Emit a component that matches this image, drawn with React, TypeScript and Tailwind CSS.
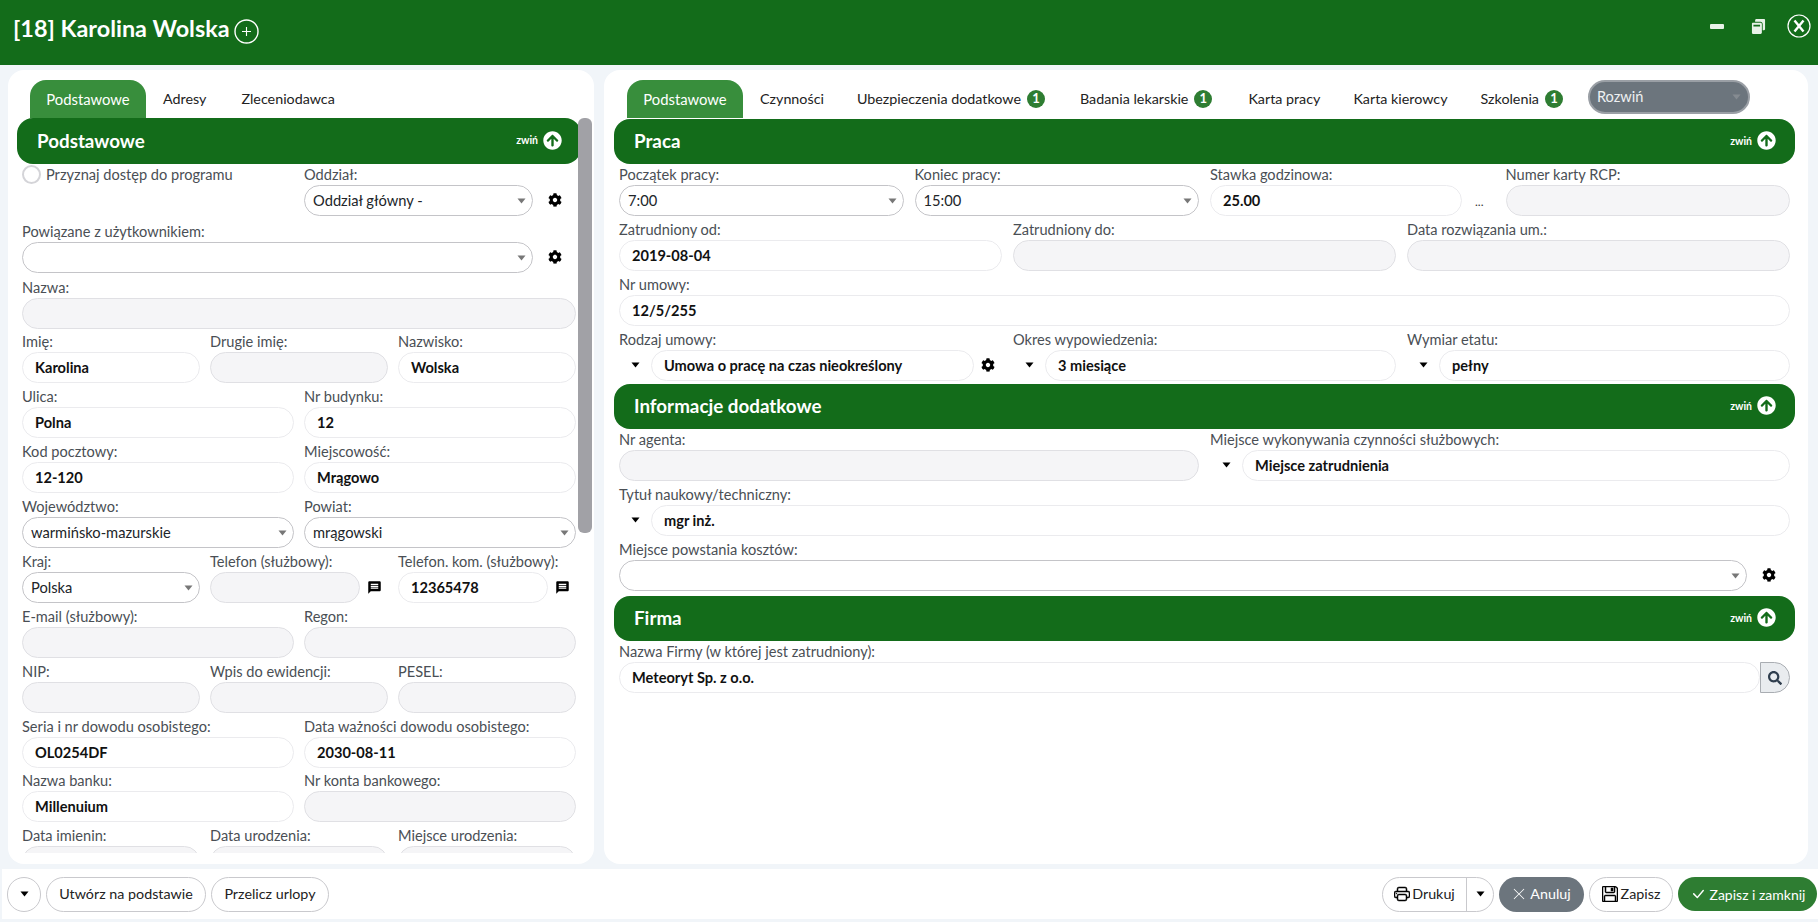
import React from "react";
import { BsPrinter, BsFloppy, BsXLg, BsCheckLg } from "react-icons/bs";
import { FaCog, FaSearch, FaWindowRestore, FaArrowCircleUp } from "react-icons/fa";
import { MdMessage } from "react-icons/md";

const Caret = ({ className = "text-[#777]" }: { className?: string }) => (
  <svg width="9" height="6" viewBox="0 0 9 6" className={className}><path d="M0.5 0.5h8L4.5 5.5z" fill="currentColor" /></svg>
);

const Gear = () => <FaCog className="text-black text-[14px] shrink-0" />;

function Control({ value, kind = "text", className = "" }: { value?: string; kind?: "text" | "disabled" | "select"; className?: string }) {
  if (kind === "select") {
    return (
      <div className={`h-[31px] rounded-full border border-[#c4c4c8] bg-white flex items-center justify-between pl-[8px] pr-[6px] text-[14.7px] text-[#212529] ${className}`}>
        <span>{value}</span>
        <Caret />
      </div>
    );
  }
  if (kind === "disabled") {
    return <div className={`h-[31px] rounded-full border border-[#e0e0e4] bg-[#f5f5f7] ${className}`} />;
  }
  return (
    <div className={`h-[31px] rounded-full border border-[#ebebee] bg-white flex items-center pl-[12px] text-[14.6px] font-bold text-[#111] whitespace-nowrap ${className}`}>{value}</div>
  );
}

function Label({ children }: { children?: React.ReactNode }) {
  return <div className="h-[24px] pt-[4px] text-[14.6px] leading-[20px] text-[#4a4f55] whitespace-nowrap">{children}</div>;
}

function Field({ label, value, kind, after, before, wide }: { label: string; value?: string; kind?: "text" | "disabled" | "select"; after?: React.ReactNode; before?: boolean; wide?: boolean }) {
  return (
    <div className="min-w-0">
      <Label>{label}</Label>
      <div className="flex items-center">
        {before && <div className="w-[32px] shrink-0 flex justify-center pb-[2px]"><Caret className="text-black" /></div>}
        <Control value={value} kind={kind} className="flex-1 min-w-0" />
        {after && <div className={`${wide ? "w-[43px]" : "w-[28px]"} shrink-0 flex justify-center pb-[1px]`}>{after}</div>}
      </div>
    </div>
  );
}

function Section({ title, tall }: { title: string; tall?: boolean }) {
  return (
    <div className={`${tall ? "h-[46px]" : "h-[45px]"} rounded-[16px] bg-[#136c1a] flex items-center justify-between pl-[20px] pr-[19px] text-white shrink-0`}>
      <span className="text-[18.8px] font-bold">{title}</span>
      <span className="flex items-center gap-[5px]">
        <span className="text-[10.5px] font-bold">zwiń</span>
        <FaArrowCircleUp className="text-[19px] -mt-[2px]" />
      </span>
    </div>
  );
}

function Tab({ children, active, badge, className = "" }: { children: string; active?: boolean; badge?: boolean; className?: string }) {
  return active ? (
    <div className={`h-[38px] w-[116px] rounded-t-[16px] bg-[#388e3c] text-white text-[14.8px] flex items-center justify-center ${className}`}>{children}</div>
  ) : (
    <div className={`h-[38px] flex items-center text-[14.3px] text-[#222] whitespace-nowrap ${className}`}>
      {children}
      {badge && <span className="ml-[6px] w-[18px] h-[18px] rounded-full bg-[#2e7d32] text-white text-[13px] font-bold flex items-center justify-center">1</span>}
    </div>
  );
}

function Btn({ children, className = "" }: { children: React.ReactNode; className?: string }) {
  return <div className={`h-[35px] rounded-full border border-[#c9c9cd] bg-white flex items-center justify-center text-[14.3px] text-[#222] whitespace-nowrap ${className}`}>{children}</div>;
}

export default function App() {
  return (
    <div className="h-screen w-full overflow-hidden flex flex-col bg-[#f1f5f9]" style={{ fontFamily: "Lato, 'Noto Sans', sans-serif" }}>
      <header className="h-[65px] shrink-0 bg-[#136c1a] text-white flex items-start justify-between pl-[13px] pr-[7px]">
        <div className="flex items-center h-[58px] gap-[4px]">
          <span className="text-[23.4px] font-bold">[18] Karolina Wolska</span>
          <svg width="25" height="25" viewBox="0 0 25 25" className="mt-[4px]" fill="none" stroke="currentColor">
            <circle cx="12.5" cy="12.5" r="11.5" strokeWidth="1.4" />
            <path d="M12.5 8v9M8 12.5h9" strokeWidth="1.1" />
          </svg>
        </div>
        <div className="flex items-center h-[52px]">
          <span className="w-[14px] h-[5px] rounded-[1px] bg-[#e8f2e8] mr-[27px]" />
          <FaWindowRestore className="text-[15px] text-[#e8f2e8] mr-[21px] scale-x-90" />
          <svg width="24" height="24" viewBox="0 0 24 24" fill="none" stroke="currentColor">
            <circle cx="12" cy="12" r="11" strokeWidth="1.2" />
            <path d="M7.5 6.5l9 11M16.5 6.5l-9 11" strokeWidth="2.4" />
          </svg>
        </div>
      </header>

      <main className="h-[804px] shrink-0 flex pt-[5px] pl-[8px] gap-[10px]">
        <section className="relative w-[586px] h-[794px] rounded-[16px] bg-white overflow-hidden flex flex-col">
          <div className="flex pl-[22px] pt-[10px] h-[48px] shrink-0">
            <Tab active>Podstawowe</Tab>
            <Tab className="ml-[17px]">Adresy</Tab>
            <Tab className="ml-[35px]">Zleceniodawca</Tab>
          </div>
          <div className="ml-[9px] w-[564px]"><Section title="Podstawowe" tall /></div>
          <div className="absolute right-[2px] top-[48px] w-[14px] h-[415px] rounded-[6px] bg-[#a1a1a6]" />
          <div className="pl-[14px] pr-[18px] flex flex-col -mt-[3px]">
            <div className="grid grid-cols-2 gap-x-[10px] h-[57px]">
              <div className="flex items-start gap-[5px] pt-[4px]">
                <span className="w-[19px] h-[19px] rounded-full border-2 border-[#d4d4d8] bg-white shrink-0" />
                <span className="text-[14.6px] leading-[20px] text-[#4a4f55] whitespace-nowrap">Przyznaj dostęp do programu</span>
              </div>
              <Field label="Oddział:" value="Oddział główny -" kind="select" after={<Gear />} wide />
            </div>
            <div className="h-[56px]"><Field label="Powiązane z użytkownikiem:" kind="select" after={<Gear />} wide /></div>
            <div className="h-[54px]"><Field label="Nazwa:" kind="disabled" /></div>
            <div className="grid grid-cols-3 gap-x-[10px] h-[55px]">
              <Field label="Imię:" value="Karolina" />
              <Field label="Drugie imię:" kind="disabled" />
              <Field label="Nazwisko:" value="Wolska" />
            </div>
            <div className="grid grid-cols-2 gap-x-[10px] h-[55px]">
              <Field label="Ulica:" value="Polna" />
              <Field label="Nr budynku:" value="12" />
            </div>
            <div className="grid grid-cols-2 gap-x-[10px] h-[55px]">
              <Field label="Kod pocztowy:" value="12-120" />
              <Field label="Miejscowość:" value="Mrągowo" />
            </div>
            <div className="grid grid-cols-2 gap-x-[10px] h-[55px]">
              <Field label="Województwo:" value="warmińsko-mazurskie" kind="select" />
              <Field label="Powiat:" value="mrągowski" kind="select" />
            </div>
            <div className="grid grid-cols-3 gap-x-[10px] h-[55px]">
              <Field label="Kraj:" value="Polska" kind="select" />
              <Field label="Telefon (służbowy):" kind="disabled" after={<MdMessage className="text-[15px] text-black" />} />
              <Field label="Telefon. kom. (służbowy):" value="12365478" after={<MdMessage className="text-[15px] text-black" />} />
            </div>
            <div className="grid grid-cols-2 gap-x-[10px] h-[55px]">
              <Field label="E-mail (służbowy):" kind="disabled" />
              <Field label="Regon:" kind="disabled" />
            </div>
            <div className="grid grid-cols-3 gap-x-[10px] h-[55px]">
              <Field label="NIP:" kind="disabled" />
              <Field label="Wpis do ewidencji:" kind="disabled" />
              <Field label="PESEL:" kind="disabled" />
            </div>
            <div className="grid grid-cols-2 gap-x-[10px] h-[54px]">
              <Field label="Seria i nr dowodu osobistego:" value="OL0254DF" />
              <Field label="Data ważności dowodu osobistego:" value="2030-08-11" />
            </div>
            <div className="grid grid-cols-2 gap-x-[10px] h-[55px]">
              <Field label="Nazwa banku:" value="Millenuium" />
              <Field label="Nr konta bankowego:" kind="disabled" />
            </div>
          </div>
          <div className="ml-[14px] mr-[18px] h-[31px] overflow-hidden shrink-0">
            <div className="grid grid-cols-3 gap-x-[10px]">
              <Field label="Data imienin:" kind="disabled" />
              <Field label="Data urodzenia:" kind="disabled" />
              <Field label="Miejsce urodzenia:" kind="disabled" />
            </div>
          </div>
        </section>

        <section className="w-[1204px] h-[794px] rounded-[16px] bg-white overflow-hidden flex flex-col">
          <div className="flex pl-[23px] pt-[10px] h-[49px] shrink-0">
            <Tab active>Podstawowe</Tab>
            <Tab className="ml-[17px]">Czynności</Tab>
            <Tab badge className="ml-[33px]">Ubezpieczenia dodatkowe</Tab>
            <Tab badge className="ml-[35px]">Badania lekarskie</Tab>
            <Tab className="ml-[36px]">Karta pracy</Tab>
            <Tab className="ml-[33px]">Karta kierowcy</Tab>
            <Tab badge className="ml-[33px]">Szkolenia</Tab>
            <div className="ml-[25px] w-[162px] h-[34px] rounded-full bg-[#6c757d] border-2 border-[#9a9fa5] text-[#eef0f2] text-[14.6px] flex items-center justify-between pl-[7px] pr-[7px]">
              <span>Rozwiń</span><Caret className="text-[#858b91]" />
            </div>
          </div>
          <div className="ml-[10px] mr-[13px]"><Section title="Praca" /></div>
          <div className="pl-[15px] pr-[18px] -mt-[3px]">
            <div className="grid grid-cols-4 gap-x-[11px] h-[55px]">
              <Field label="Początek pracy:" value="7:00" kind="select" />
              <Field label="Koniec pracy:" value="15:00" kind="select" />
              <div>
                <Label>Stawka godzinowa:</Label>
                <div className="flex items-center w-[296px]">
                  <Control value="25.00" className="w-[252px] shrink-0" />
                  <span className="ml-[13px] text-[12px] text-[#333] mt-[2px]">...</span>
                </div>
              </div>
              <Field label="Numer karty RCP:" kind="disabled" />
            </div>
            <div className="grid grid-cols-3 gap-x-[11px] h-[55px]">
              <Field label="Zatrudniony od:" value="2019-08-04" />
              <Field label="Zatrudniony do:" kind="disabled" />
              <Field label="Data rozwiązania um.:" kind="disabled" />
            </div>
            <div className="h-[55px]"><Field label="Nr umowy:" value="12/5/255" /></div>
            <div className="grid grid-cols-3 gap-x-[11px] h-[55px]">
              <Field label="Rodzaj umowy:" value="Umowa o pracę na czas nieokreślony" before after={<Gear />} />
              <Field label="Okres wypowiedzenia:" value="3 miesiące" before />
              <Field label="Wymiar etatu:" value="pełny" before />
            </div>
          </div>
          <div className="ml-[10px] mr-[13px] mt-[3px]"><Section title="Informacje dodatkowe" /></div>
          <div className="pl-[15px] pr-[18px] -mt-[3px]">
            <div className="grid grid-cols-2 gap-x-[11px] h-[55px]">
              <Field label="Nr agenta:" kind="disabled" />
              <div>
                <Label>Miejsce wykonywania czynności służbowych:</Label>
                <div className="flex items-center">
                  <div className="w-[32px] shrink-0 flex justify-center pb-[2px]"><Caret className="text-black" /></div>
                  <Control value="Miejsce zatrudnienia" className="flex-1" />
                </div>
              </div>
            </div>
            <div className="h-[55px]"><Field label="Tytuł naukowy/techniczny:" value="mgr inż." before /></div>
            <div className="h-[56px]"><Field label="Miejsce powstania kosztów:" kind="select" after={<Gear />} wide /></div>
          </div>
          <div className="ml-[10px] mr-[13px] mt-[4px]"><Section title="Firma" /></div>
          <div className="pl-[15px] pr-[18px] -mt-[3px]">
            <Label>Nazwa Firmy (w której jest zatrudniony):</Label>
            <div className="flex">
              <Control value="Meteoryt Sp. z o.o." className="flex-1" />
              <div className="w-[30px] h-[31px] border border-[#a9adb2] bg-[#e9ecef] rounded-r-full flex items-center justify-center">
                <FaSearch className="text-[14px] text-[#2f3e4e]" />
              </div>
            </div>
          </div>
        </section>
      </main>

      <footer className="h-[50px] shrink-0 ml-[2px] bg-white flex items-center justify-between pl-[5px] pr-[1px]">
        <div className="flex gap-[5px] items-center">
          <Btn className="w-[34px]"><Caret className="text-black" /></Btn>
          <Btn className="w-[160px]">Utwórz na podstawie</Btn>
          <Btn className="w-[118px]">Przelicz urlopy</Btn>
        </div>
        <div className="flex gap-[5px] items-center">
          <div className="h-[35px] w-[112px] rounded-full border border-[#c9c9cd] bg-white flex items-center text-[14.3px] text-[#222]">
            <span className="w-[84px] h-full flex items-center justify-center gap-[2px] border-r border-[#c9c9cd]"><BsPrinter className="text-[16px] text-black" stroke="currentColor" strokeWidth="0.5" />Drukuj</span>
            <span className="flex-1 flex justify-center"><Caret className="text-black" /></span>
          </div>
          <div className="h-[35px] w-[85px] rounded-full bg-[#6c757d] text-white text-[14.3px] flex items-center justify-center gap-[4px]"><BsXLg className="text-[14px]" />Anuluj</div>
          <Btn className="w-[84px] gap-[3px]"><BsFloppy className="text-[16px] text-black" stroke="currentColor" strokeWidth="0.5" />Zapisz</Btn>
          <div className="h-[34px] w-[139px] rounded-full bg-[#2e7d32] text-white text-[14px] flex items-center justify-center gap-[4px]"><BsCheckLg className="text-[16px]" />Zapisz i zamknij</div>
        </div>
      </footer>
    </div>
  );
}
